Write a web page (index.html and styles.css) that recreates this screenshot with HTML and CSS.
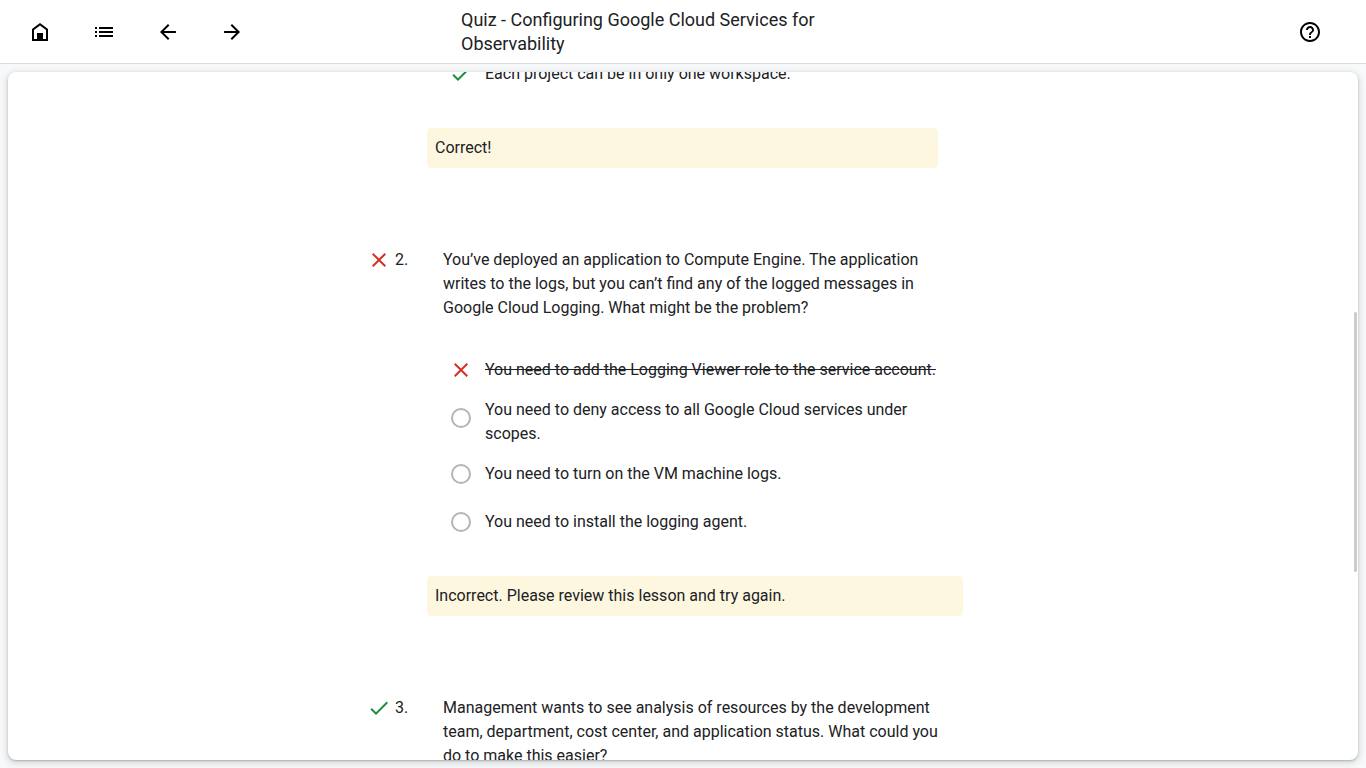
FILE: index.html
```html
<!DOCTYPE html>
<html lang="en">
<head>
<meta charset="utf-8">
<meta name="viewport" content="width=device-width, initial-scale=1">
<title>Quiz - Configuring Google Cloud Services for Observability</title>
<link rel="stylesheet" href="styles.css">
</head>
<body>
<header class="topbar">
  <nav class="topbar-nav" aria-label="Course">
    <button class="icon-button" type="button" aria-label="Home"><svg class="icon" viewBox="0 0 24 24"><path fill-rule="evenodd" d="M4 21V9l8-6 8 6v12H4zM6 10v9h3v-6h6v6h3v-9l-6-4.500z"/><path d="M9 13h6v7H9z"/></svg></button>
    <button class="icon-button" type="button" aria-label="Outline"><svg class="icon" viewBox="0 0 24 24"><path d="M3 7h2v2H3zM3 11h2v2H3zM3 15h2v2H3zM7 7h14v2H7zM7 11h14v2H7zM7 15h14v2H7z"/></svg></button>
    <button class="icon-button" type="button" aria-label="Previous"><svg class="icon" viewBox="0 0 24 24"><path d="M20 11H7.830l5.590-5.590L12 4l-8 8 8 8 1.410-1.410L7.830 13H20z"/></svg></button>
    <button class="icon-button" type="button" aria-label="Next"><svg class="icon" viewBox="0 0 24 24"><path d="M12 4l-1.410 1.410L16.170 11H4v2h12.170l-5.580 5.590L12 20l8-8z"/></svg></button>
  </nav>
  <h1 class="topbar-title">Quiz - Configuring Google Cloud Services for Observability</h1>
  <div class="topbar-end">
    <button class="icon-button" type="button" aria-label="Help"><svg class="icon" viewBox="0 0 24 24"><path d="M11 18h2v-2h-2v2zm1-16C6.480 2 2 6.480 2 12s4.480 10 10 10 10-4.480 10-10S17.520 2 12 2zm0 18c-4.410 0-8-3.590-8-8s3.590-8 8-8 8 3.590 8 8-3.590 8-8 8zm0-14c-2.210 0-4 1.790-4 4h2c0-1.100.9-2 2-2s2 .9 2 2c0 2-3 1.750-3 5h2c0-2.250 3-2.500 3-5 0-2.210-1.790-4-4-4z"/></svg></button>
  </div>
</header>
<main class="panel">
  <div class="scroll-thumb"></div>
  <div class="quiz">
    <section class="question">
      <div class="question-body question-body-narrow">
        <div class="options">
          <div class="option">
            <span class="option-mark"><svg class="icon icon-right" viewBox="0 0 24 24" role="img" aria-label="Correct"><path d="M9 16.170L4.830 12l-1.420 1.410L9 19 21 7l-1.410-1.410z"/></svg></span>
            <span class="option-text">Each project can be in only one workspace.</span>
          </div>
        </div>
        <p class="feedback">Correct!</p>
      </div>
    </section>

    <section class="question">
      <svg class="icon icon-wrong" viewBox="0 0 24 24" role="img" aria-label="Incorrect"><path d="M19 6.410L17.590 5 12 10.590 6.410 5 5 6.410 10.590 12 5 17.590 6.410 19 12 13.410 17.590 19 19 17.590 13.410 12z"/></svg>
      <span class="question-number">2.</span>
      <div class="question-body">
        <p class="question-text" id="q2">You’ve deployed an application to Compute Engine. The application writes to the logs, but you can’t find any of the logged messages in Google Cloud Logging. What might be the problem?</p>
        <div class="options" role="radiogroup" aria-labelledby="q2">
          <div class="option">
            <span class="option-mark"><svg class="icon icon-wrong" viewBox="0 0 24 24" role="img" aria-label="Incorrect"><path d="M19 6.410L17.590 5 12 10.590 6.410 5 5 6.410 10.590 12 5 17.590 6.410 19 12 13.410 17.590 19 19 17.590 13.410 12z"/></svg></span>
            <s class="option-text">You need to add the Logging Viewer role to the service account.</s>
          </div>
          <div class="option">
            <span class="option-mark"><input class="radio" type="radio" name="q2" id="q2b"></span>
            <label class="option-text" for="q2b">You need to deny access to all Google Cloud services under scopes.</label>
          </div>
          <div class="option">
            <span class="option-mark"><input class="radio" type="radio" name="q2" id="q2c"></span>
            <label class="option-text" for="q2c">You need to turn on the VM machine logs.</label>
          </div>
          <div class="option">
            <span class="option-mark"><input class="radio" type="radio" name="q2" id="q2d"></span>
            <label class="option-text" for="q2d">You need to install the logging agent.</label>
          </div>
        </div>
        <p class="feedback">Incorrect. Please review this lesson and try again.</p>
      </div>
    </section>

    <section class="question">
      <svg class="icon icon-right" viewBox="0 0 24 24" role="img" aria-label="Correct"><path d="M9 16.170L4.830 12l-1.420 1.410L9 19 21 7l-1.410-1.410z"/></svg>
      <span class="question-number">3.</span>
      <div class="question-body">
        <p class="question-text">Management wants to see analysis of resources by the development team, department, cost center, and application status. What could you do to make this easier?</p>
      </div>
    </section>
  </div>
</main>
</body>
</html>
```

FILE: styles.css
```css
* {
  box-sizing: border-box;
}

body {
  margin: 0;
  height: 100vh;
  display: flex;
  flex-direction: column;
  overflow: hidden;
  background: #f8f9fa;
  color: #202124;
  font: 16px/24px Roboto, "Liberation Sans", sans-serif;
}

p,
h1 {
  margin: 0;
}

.topbar {
  flex: none;
  display: grid;
  grid-template-columns: 1fr minmax(0, 444px) 1fr;
  align-items: center;
  height: 64px;
  padding: 0 8px;
  border-bottom: 1px solid #dadce0;
  background: #fff;
}

.topbar-nav {
  display: flex;
}

.topbar-title {
  font-family: "Google Sans", Roboto, sans-serif;
  font-size: 18px;
  font-weight: 400;
  line-height: 24px;
}

.topbar-end {
  display: flex;
  justify-content: flex-end;
  padding-right: 16px;
}

.icon-button {
  display: flex;
  align-items: center;
  justify-content: center;
  width: 64px;
  height: 48px;
  padding: 0;
  border: 0;
  background: none;
  color: #000;
}

.icon {
  flex: none;
  display: block;
  width: 24px;
  height: 24px;
  fill: currentColor;
}

.icon-right {
  color: #1e8e3e;
}

.icon-wrong {
  color: #d93025;
}

.panel {
  position: relative;
  flex: 1;
  min-height: 0;
  margin: 8px;
  overflow: hidden;
  border-radius: 8px;
  background: #fff;
  box-shadow: 0 1px 2px rgba(60, 64, 67, 0.3), 0 2px 6px 2px rgba(60, 64, 67, 0.15);
}

.scroll-thumb {
  position: absolute;
  top: 240px;
  right: 1px;
  width: 3px;
  height: 260px;
  border-radius: 2px;
  background: #ccc;
}

.quiz {
  display: flex;
  flex-direction: column;
  gap: 80px;
  width: 100%;
  max-width: 632px;
  margin: -22px auto 0;
}

.question {
  display: grid;
  grid-template-columns: 24px 32px minmax(0, 536px);
  column-gap: 4px;
}

.question-number {
  grid-column: 2;
}

.question-body {
  grid-column: 3;
  margin-left: -4px;
  margin-right: 4px;
}

.question-body-narrow {
  margin-right: 29px;
}

.question-text {
  padding: 0 16px;
}

.question-text + .options {
  margin-top: 26px;
}

.options {
  padding: 0 16px 0 10px;
}

.option {
  display: flex;
  align-items: flex-start;
  min-height: 48px;
}

.option-mark {
  flex: none;
  display: flex;
  align-items: center;
  justify-content: center;
  width: 48px;
  height: 48px;
}

.option-text {
  align-self: center;
  padding: 4px 0;
}

.radio {
  appearance: none;
  width: 20px;
  height: 20px;
  margin: 0;
  border: 2px solid #b4b4b4;
  border-radius: 50%;
  background: #fff;
}

.feedback {
  margin-top: 30px;
  padding: 8px;
  border-radius: 4px;
  background: #fef7e0;
}
```
